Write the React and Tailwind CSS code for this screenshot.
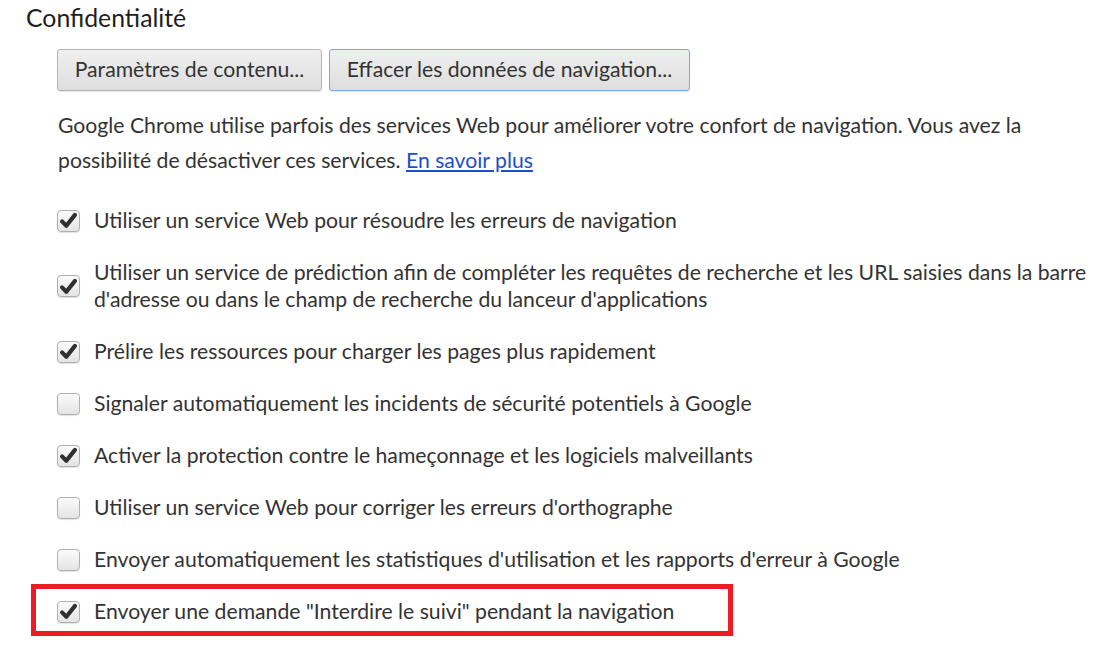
import React from "react";

const Check = () => (
  <svg viewBox="0 0 22 22" className="w-[19px] h-[19px]">
    <path
      d="M3.5 12 L8.5 17 L18.5 4.5"
      fill="none"
      stroke="#303030"
      strokeWidth="4.8"
      strokeLinecap="round"
      strokeLinejoin="round"
    />
  </svg>
);

const Box = ({ checked }) => (
  <div className="w-[23px] h-[22px] shrink-0 rounded-[4px] border border-[#b0b0b0] bg-gradient-to-b from-[#fbfbfb] to-[#e4e4e4] shadow-[0_1px_1px_rgba(0,0,0,0.12)] flex items-center justify-center">
    {checked && <Check />}
  </div>
);

const Row = ({ checked, children }) => (
  <div className="flex items-center gap-[14px]">
    <Box checked={checked} />
    <div className="leading-[27px]">{children}</div>
  </div>
);

const App = () => {
  return (
    <div
      className="w-[1098px] h-[650px] bg-white text-[#333] text-[21.2px] overflow-hidden"
      style={{ fontFamily: "Lato, 'Open Sans', sans-serif" }}
    >
      <div className="pl-[26px] pt-[3px] text-[24.8px] leading-[30px] text-[#1e1e1e]">
        Confidentialité
      </div>
      <div className="pl-[57px] pr-[6px]">
        {/* Buttons */}
        <div className="flex gap-[7px] mt-[16px]">
          <button className="h-[42px] w-[265px] rounded-[3px] border border-[#b5b5b5] bg-gradient-to-b from-[#efefef] to-[#dedede] shadow-[0_1px_1px_rgba(0,0,0,0.1)] text-[#333]">
            Paramètres de contenu...
          </button>
          <button className="h-[42px] w-[361px] rounded-[3px] border border-[#7aa6ee] bg-gradient-to-b from-[#efefef] to-[#dedede] shadow-[0_1px_1px_rgba(0,0,0,0.1)] text-[#333]">
            Effacer les données de navigation...
          </button>
        </div>

        {/* Intro */}
        <p className="mt-[17px] leading-[35px] pl-[1px] whitespace-nowrap">
          Google Chrome utilise parfois des services Web pour améliorer votre
          confort de navigation. Vous avez la
          <br />
          possibilité de désactiver ces services.{" "}
          <a href="#" className="text-[#1a4fcc] underline underline-offset-2">
            En savoir plus
          </a>
        </p>

        {/* Options */}
        <div className="mt-[29px] flex flex-col gap-[25px]">
          <Row checked>Utiliser un service Web pour résoudre les erreurs de navigation</Row>
          <Row checked>
            <span className="whitespace-nowrap">
              Utiliser un service de prédiction afin de compléter les requêtes de
              recherche et les URL saisies dans la barre
            </span>
            <br />
            d'adresse ou dans le champ de recherche du lanceur d'applications
          </Row>
          <Row checked>Prélire les ressources pour charger les pages plus rapidement</Row>
          <Row>Signaler automatiquement les incidents de sécurité potentiels à Google</Row>
          <Row checked>Activer la protection contre le hameçonnage et les logiciels malveillants</Row>
          <Row>Utiliser un service Web pour corriger les erreurs d'orthographe</Row>
          <Row>Envoyer automatiquement les statistiques d'utilisation et les rapports d'erreur à Google</Row>
          <div className="relative">
            <Row checked>Envoyer une demande "Interdire le suivi" pendant la navigation</Row>
            {/* annotation highlight */}
            <div className="absolute left-[-26px] top-[-14px] w-[702px] h-[52px] border-[5px] border-[#ed1c24] pointer-events-none" />
          </div>
        </div>
      </div>
    </div>
  );
};

export default App;
